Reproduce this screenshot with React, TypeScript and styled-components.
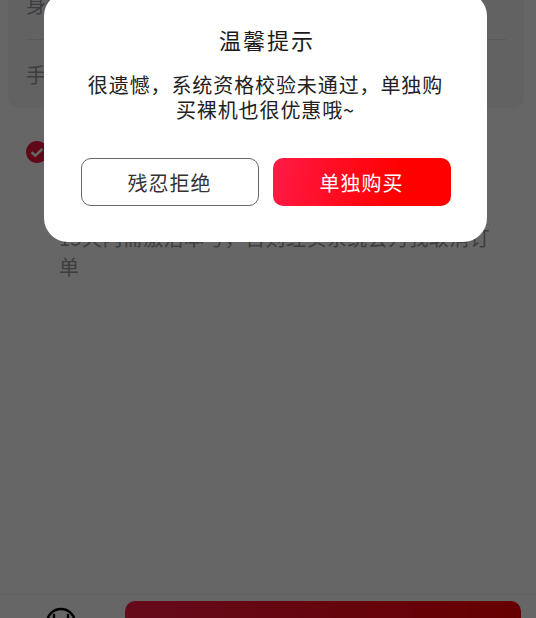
import { FC } from 'react';
import styled, { createGlobalStyle } from 'styled-components';

const GlobalStyle = createGlobalStyle`
  html, body {
    margin: 0;
    padding: 0;
    height: 100%;
    overflow: hidden;
    background: #fff;
    font-family: "Noto Sans CJK SC", "Liberation Sans", sans-serif;
  }
`;

const formRows = ['身份证', '手机号'];

const agreementLines = [
  '我已阅读并同意相关协议，本次订购号码需',
  '在规定时间内完成激活，请您确认信息无误',
  '后再提交订单，如有疑问请联系在线客服，',
  '15天内需激活本号，否则经实系统会为我取消订',
  '单',
];

const App: FC = () => {
  return (
    <>
      <GlobalStyle />
      <Page>
        <FormCard>
          {formRows.map((label) => (
            <FormRow key={label}>
              <span>{label}</span>
            </FormRow>
          ))}
        </FormCard>
        <Agreement>
          <CheckMark>
            <svg width="22" height="22" viewBox="0 0 22 22">
              <circle cx="11" cy="11" r="11" fill="#f0163a" />
              <path d="M5.5 11.2l3.8 3.4 7-6.6" fill="none" stroke="#fff" strokeWidth="2.6" />
            </svg>
          </CheckMark>
          <AgreementText>
            {agreementLines.map((line) => (
              <AgreementLine key={line}>{line}</AgreementLine>
            ))}
          </AgreementText>
        </Agreement>
      </Page>

      <BottomBar>
        <ServiceIcon>
          <svg width="32" height="32" viewBox="0 0 32 32" fill="none" stroke="#000" strokeWidth="2.4">
            <circle cx="16" cy="16" r="14" />
            <path d="M9 8v4M23 8v4" strokeLinecap="round" />
            <path d="M9 19c2 4 12 4 14 0" />
          </svg>
        </ServiceIcon>
        <BuyButton />
      </BottomBar>

      <Overlay />

      <Dialog>
        <Title>温馨提示</Title>
        <Message>很遗憾，系统资格校验未通过，单独购买裸机也很优惠哦~</Message>
        <Actions>
          <RejectButton>残忍拒绝</RejectButton>
          <ConfirmButton>单独购买</ConfirmButton>
        </Actions>
      </Dialog>
    </>
  );
};

export default App;

const Page = styled.div`
  padding: 0 12px 0 8px;
  margin-top: -30px;
`;

const FormCard = styled.div`
  background: #f5f5f5;
  border-radius: 10px;
  padding: 0 18px;
  height: 138px;
  box-sizing: border-box;
`;

const FormRow = styled.div`
  height: 69px;
  display: flex;
  align-items: center;
  font-size: 20px;
  color: #999;

  & + & {
    border-top: 1px solid #e0e0e0;
  }
`;

const Agreement = styled.div`
  display: flex;
  gap: 11px;
  margin-top: 33px;
  padding-left: 18px;
`;

const CheckMark = styled.div`
  flex: none;
  width: 22px;
  height: 22px;

  svg {
    display: block;
  }
`;

const AgreementText = styled.div`
  font-size: 20px;
  line-height: 29px;
  letter-spacing: 0.4px;
  color: #999;
  margin-top: -5px;
`;

const AgreementLine = styled.div`
  white-space: nowrap;
`;

const BottomBar = styled.div`
  position: fixed;
  left: 0;
  right: 0;
  top: 594px;
  height: 80px;
  box-sizing: border-box;
  border-top: 1px solid #f0f0f0;
  background: #fff;
  display: flex;
  align-items: flex-start;
  padding: 6px 15px 0 45px;
`;

const ServiceIcon = styled.div`
  flex: none;
  width: 32px;
  margin-top: 6px;
`;

const BuyButton = styled.div`
  flex: 1;
  height: 60px;
  margin-left: 48px;
  border-radius: 10px;
  background: linear-gradient(90deg, #ff1a46, #ff0000);
`;

const Overlay = styled.div`
  position: fixed;
  inset: 0;
  background: rgba(0, 0, 0, 0.6);
`;

const Dialog = styled.div`
  position: fixed;
  left: 44px;
  top: -8px;
  width: 443px;
  height: 250px;
  box-sizing: border-box;
  background: #fff;
  border-radius: 24px;
  padding-top: 31px;
  display: flex;
  flex-direction: column;
  align-items: center;
`;

const Title = styled.div`
  font-size: 22px;
  line-height: 32px;
  letter-spacing: 2px;
  padding-left: 3px;
  color: #1a1a1a;
`;

const Message = styled.div`
  width: 360px;
  margin-top: 17px;
  font-size: 20px;
  line-height: 25px;
  letter-spacing: 0.9px;
  color: #222;
  text-align: center;
`;

const Actions = styled.div`
  display: flex;
  gap: 14px;
  margin-top: 36px;
`;

const RejectButton = styled.div`
  width: 178px;
  height: 48px;
  box-sizing: border-box;
  display: flex;
  align-items: center;
  justify-content: center;
  border: 1px solid #666;
  border-radius: 10px;
  font-size: 20px;
  letter-spacing: 1px;
  color: #333;
`;

const ConfirmButton = styled(RejectButton)`
  border: none;
  color: #fff;
  background: linear-gradient(100deg, #ff1a46, #ff0000 70%);
`;
